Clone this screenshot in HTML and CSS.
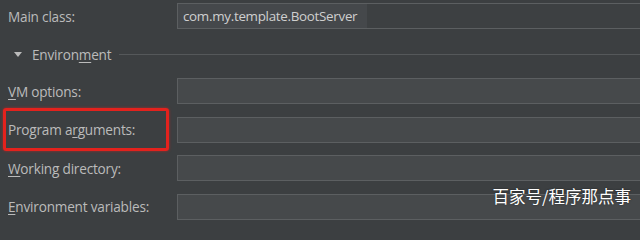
FILE: index.html
```html
<!DOCTYPE html>
<html lang="en">
<head>
  <meta charset="UTF-8">
  <link rel="stylesheet" href="styles.css">
  <title>Run configuration</title>
</head>
<body>
  <div class="form">
    <div class="row first">
      <label class="label">Main class:</label>
      <div class="field main-field"><span class="value">com.my.template.BootServer</span></div>
    </div>

    <div class="section">
      <span class="arrow"></span>
      <span class="section-title">Environ<u>m</u>ent</span>
      <span class="section-line"></span>
    </div>

    <div class="row">
      <label class="label"><u>V</u>M options:</label>
      <div class="field"></div>
    </div>
    <div class="row">
      <label class="label">Program a<u>r</u>guments:</label>
      <div class="field"></div>
    </div>
    <div class="row">
      <label class="label"><u>W</u>orking directory:</label>
      <div class="field"></div>
    </div>
    <div class="row">
      <label class="label"><u>E</u>nvironment variables:</label>
      <div class="field"></div>
    </div>
  </div>

  <div class="highlight"></div>
  <div class="watermark">百家号/程序那点事</div>
</body>
</html>
```

FILE: styles.css
```css
body {
  margin: 0;
  padding: 0;
  background-color: #3c3f41;
  font-family: "Open Sans", "Noto Sans", sans-serif;
  font-size: 13.6px;
  letter-spacing: -0.2px;
  color: #bbbbbb;
  height: 240px;
  overflow: hidden;
  position: relative;
}

.form {
  display: flex;
  flex-direction: column;
}

.row {
  display: flex;
  align-items: center;
  height: 26px;
  margin-bottom: 12.5px;
}

.row.first {
  margin-top: 3px;
  margin-bottom: 12px;
}

.label {
  width: 177px;
  flex: none;
  padding-left: 8px;
  box-sizing: border-box;
}

.label u,
.section-title u {
  text-underline-offset: 2px;
}

.field {
  flex: 1;
  height: 100%;
  box-sizing: border-box;
  border: 1px solid #5c5f61;
  border-right: none;
  background-color: #46494b;
}

.main-field {
  background-color: #3d4042;
  display: flex;
  align-items: stretch;
}

.value {
  display: flex;
  align-items: center;
  width: 184px;
  padding-left: 5px;
  background-color: #45484b;
  color: #cfcfcf;
  font-size: 13.4px;
  letter-spacing: -0.3px;
}

.section {
  display: flex;
  align-items: center;
  height: 26px;
  margin-bottom: 11px;
}

.arrow {
  width: 0;
  height: 0;
  margin-left: 14px;
  margin-right: 10px;
  border-left: 4px solid transparent;
  border-right: 4px solid transparent;
  border-top: 5px solid #bbbbbb;
}

.section-title {
  margin-right: 8px;
}

.section-line {
  flex: 1;
  height: 1px;
  background-color: #55585a;
}

.highlight {
  position: absolute;
  left: 3px;
  top: 108px;
  width: 160px;
  height: 37px;
  border: 3px solid #e3221d;
  border-radius: 3px;
  box-shadow: 0 0 3px rgba(227, 34, 29, 0.6);
}

.watermark {
  position: absolute;
  right: 9px;
  top: 184px;
  font-family: "Noto Sans CJK SC", sans-serif;
  font-size: 16.5px;
  letter-spacing: 0;
  color: #ffffff;
  text-shadow: 0 0 2px rgba(0, 0, 0, 0.5);
}
```
